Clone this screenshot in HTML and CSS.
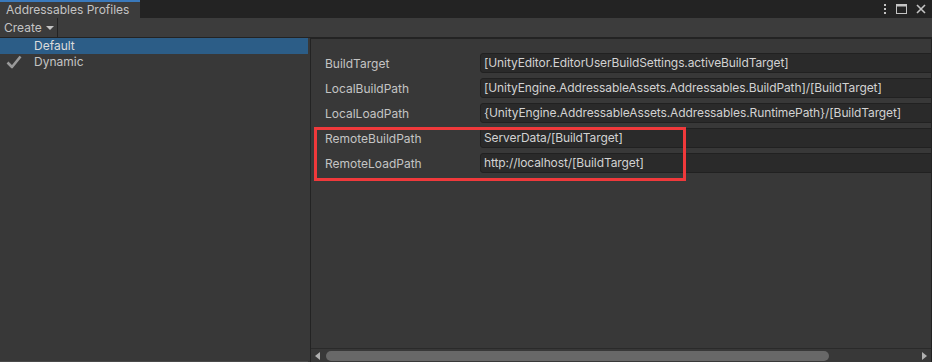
FILE: index.html
```html
<!DOCTYPE html>
<html>
<head>
  <meta charset="utf-8">
  <title>Addressables Profiles</title>
  <link rel="stylesheet" href="styles.css">
</head>
<body>
<div class="window">
  <div class="tabbar">
    <div class="tab">Addressables Profiles</div>
    <div class="tab-icons">
      <svg width="4" height="10" viewBox="0 0 4 10"><rect x="1" y="0" width="2" height="2" fill="#c4c4c4"/><rect x="1" y="4" width="2" height="2" fill="#c4c4c4"/><rect x="1" y="8" width="2" height="2" fill="#c4c4c4"/></svg>
      <svg width="11" height="10" viewBox="0 0 11 10"><rect x="0.5" y="0.5" width="10" height="9" fill="none" stroke="#c4c4c4"/><rect x="0.5" y="0.5" width="10" height="2" fill="#c4c4c4"/></svg>
      <svg width="10" height="10" viewBox="0 0 10 10"><path d="M1 1 L9 9 M9 1 L1 9" stroke="#c4c4c4" stroke-width="1.6"/></svg>
    </div>
  </div>

  <div class="toolbar">
    <div class="create-btn">Create <span class="caret"></span></div>
  </div>

  <div class="main">
    <div class="profiles">
      <div class="profile selected">Default</div>
      <div class="profile">
        <svg class="check" width="16" height="14" viewBox="0 0 16 14"><path d="M1.5 7.5 L6 12 L14.5 1.5" fill="none" stroke="#9a9a9a" stroke-width="2.6" stroke-linejoin="round"/></svg>
        Dynamic
      </div>
    </div>
    <div class="splitter"></div>
    <div class="variables">
      <div class="var-list">
        <div class="var-row">
          <div class="var-name">BuildTarget</div>
          <div class="var-value">[UnityEditor.EditorUserBuildSettings.activeBuildTarget]</div>
        </div>
        <div class="var-row">
          <div class="var-name">LocalBuildPath</div>
          <div class="var-value">[UnityEngine.AddressableAssets.Addressables.BuildPath]/[BuildTarget]</div>
        </div>
        <div class="var-row">
          <div class="var-name">LocalLoadPath</div>
          <div class="var-value">{UnityEngine.AddressableAssets.Addressables.RuntimePath}/[BuildTarget]</div>
        </div>
        <div class="var-row">
          <div class="var-name">RemoteBuildPath</div>
          <div class="var-value">ServerData/[BuildTarget]</div>
        </div>
        <div class="var-row">
          <div class="var-name">RemoteLoadPath</div>
          <div class="var-value">http://localhost/[BuildTarget]</div>
        </div>
        <div class="highlight"></div>
      </div>
      <div class="hscroll">
        <span class="arrow left"></span>
        <div class="track"><div class="thumb"></div></div>
        <span class="arrow right"></span>
      </div>
    </div>
  </div>
</div>
</body>
</html>
```

FILE: styles.css
```css
html, body {
  margin: 0;
  padding: 0;
}

body {
  background: #383838;
  font-family: Inter, "Noto Sans", sans-serif;
  font-size: 12px;
  color: #c4c4c4;
}

.window {
  width: 932px;
  height: 362px;
  overflow: hidden;
  display: flex;
  flex-direction: column;
}

.tabbar {
  height: 18px;
  background: #232323;
  display: flex;
  justify-content: space-between;
}
.tab {
  width: 134px;
  padding-left: 6px;
  background: #3c3c3c;
  border-top: 2px solid #3a79bb;
  line-height: 16px;
  color: #c4c4c4;
}
.tab-icons {
  display: flex;
  align-items: center;
  gap: 9px;
  padding-right: 6px;
}

.toolbar {
  height: 19px;
  background: #3c3c3c;
  border-bottom: 1px solid #232323;
  display: flex;
}
.create-btn {
  width: 53px;
  padding-left: 4px;
  border-right: 1px solid #232323;
  line-height: 19px;
  color: #c4c4c4;
}
.caret {
  display: inline-block;
  width: 0;
  height: 0;
  border-left: 4px solid transparent;
  border-right: 4px solid transparent;
  border-top: 4px solid #c4c4c4;
  vertical-align: 2px;
  margin-left: 1px;
}

.main {
  flex: 1;
  display: flex;
  min-height: 0;
}

.profiles {
  width: 308px;
  border-bottom: 1px solid #4a4a4a;
}
.profile {
  height: 16px;
  line-height: 16px;
  padding-left: 34px;
  position: relative;
  color: #c4c4c4;
}
.profile.selected {
  background: #2c5d87;
  color: #dcdcdc;
}
.check {
  position: absolute;
  left: 6px;
  top: 1px;
}

.splitter {
  width: 2px;
}

.variables {
  flex: 1;
  display: flex;
  flex-direction: column;
  border-left: 1px solid #232323;
  border-top: 1px solid #232323;
  border-right: 1px solid #232323;
  min-width: 0;
}

.var-list {
  flex: 1;
  position: relative;
  overflow: hidden;
  padding: 14px 0 0 14px;
}
.var-row {
  display: flex;
  height: 20px;
  margin-bottom: 5px;
  align-items: center;
}
.var-name {
  width: 155px;
  flex-shrink: 0;
  color: #c4c4c4;
}
.var-value {
  width: 480px;
  flex-shrink: 0;
  height: 18px;
  line-height: 18px;
  padding-left: 3px;
  background: #2a2a2a;
  border: 1px solid #212121;
  border-radius: 3px;
  color: #d2d2d2;
  letter-spacing: -0.1px;
  white-space: nowrap;
}

.highlight {
  position: absolute;
  left: 3px;
  top: 88px;
  width: 366px;
  height: 48px;
  border: 3px solid #f0393b;
}

.hscroll {
  height: 13px;
  border-top: 1px solid #2a2a2a;
  display: flex;
  align-items: center;
  padding: 0 4px;
  gap: 6px;
}
.track {
  flex: 1;
  height: 10px;
}
.thumb {
  width: 503px;
  height: 10px;
  background: #686868;
  border-radius: 5px;
}
.arrow {
  width: 0;
  height: 0;
  border-top: 4px solid transparent;
  border-bottom: 4px solid transparent;
}
.arrow.left {
  border-right: 5px solid #b0b0b0;
}
.arrow.right {
  border-left: 5px solid #b0b0b0;
}
```
